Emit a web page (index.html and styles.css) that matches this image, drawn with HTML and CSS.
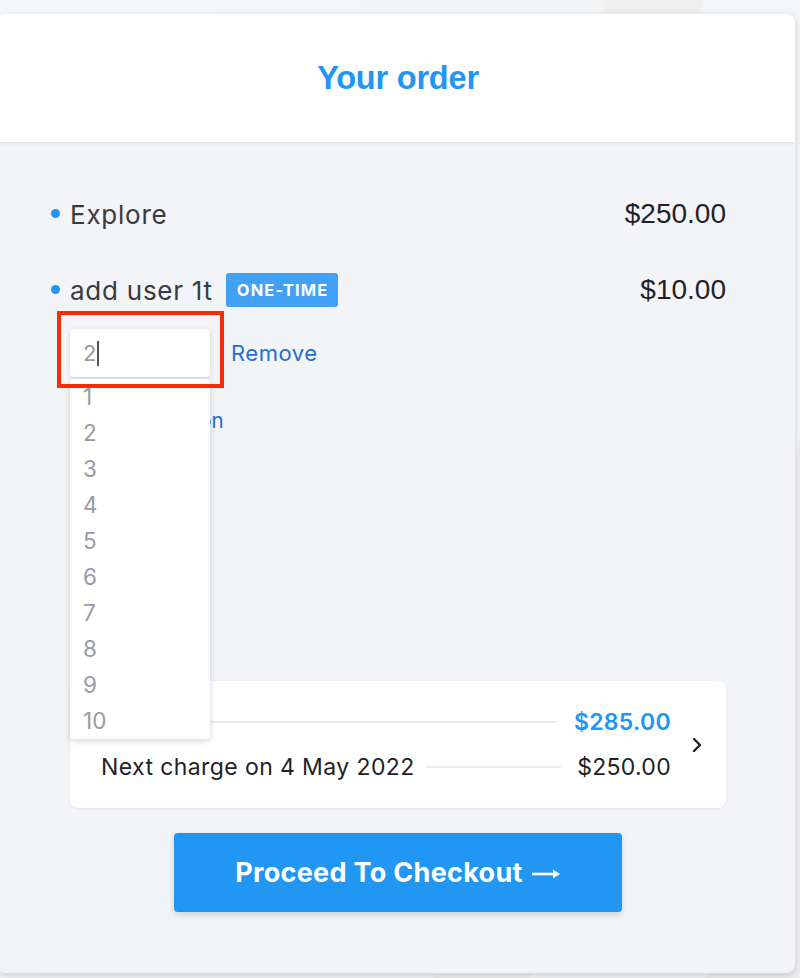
FILE: index.html
```html
<!DOCTYPE html>
<html lang="en">
<head>
<meta charset="utf-8">
<title>Your order</title>
<link rel="stylesheet" href="styles.css">
</head>
<body>
<div class="page">
  <div class="card">
    <header class="card-head">
      <h1 class="title">Your order</h1>
    </header>
    <div class="card-body">
      <ul class="items">
        <li class="item">
          <span class="item-name">Explore</span>
          <span class="price">$250.00</span>
        </li>
        <li class="item">
          <span class="item-name">add user 1t <span class="badge">ONE-TIME</span></span>
          <span class="price">$10.00</span>
        </li>
      </ul>
      <div class="qty-row">
        <div class="qty">
          <div class="qty-input">2<span class="caret"></span></div>
          <ul class="qty-menu">
            <li>1</li><li>2</li><li>3</li><li>4</li><li>5</li>
            <li>6</li><li>7</li><li>8</li><li>9</li><li>10</li>
          </ul>
          <div class="highlight"></div>
        </div>
        <a class="link" href="#">Remove</a>
      </div>
      <a class="link desc-link" href="#">Add description</a>
      <div class="summary">
        <div class="summary-rows">
          <div class="sum-row">
            <span class="sum-label">Total</span>
            <span class="sum-line"></span>
            <span class="sum-value total">$285.00</span>
          </div>
          <div class="sum-row">
            <span class="sum-label">Next charge on 4 May 2022</span>
            <span class="sum-line"></span>
            <span class="sum-value">$250.00</span>
          </div>
        </div>
        <svg class="chevron" width="12" height="16" viewBox="0 0 12 16"><path d="M3 2 L9 8 L3 14" fill="none" stroke="#1f1f24" stroke-width="2.4" stroke-linecap="round" stroke-linejoin="round"/></svg>
      </div>
      <button class="checkout" type="button">Proceed To Checkout <svg class="arrow" width="30" height="12" viewBox="0 0 30 12"><path d="M1 6 H26" stroke="#fff" stroke-width="2.6"/><path d="M22 1.5 L29 6 L22 10.5 Z" fill="#fff"/></svg></button>
    </div>
  </div>
</div>
</body>
</html>
```

FILE: styles.css
```css
* { box-sizing: border-box; }

html, body {
  margin: 0;
  padding: 0;
}

body {
  background: linear-gradient(100deg, #f6f7f8 0%, #f4f5f6 62%, #efefef 62.5%, #efefef 72%, #f5f6f7 72.5%, #f5f6f7 90%, #eeeeee 90.5%);
  font-family: "Inter", "Noto Sans", sans-serif;
  color: #3a3a40;
}

.page {
  padding: 14px 5px 5px 0;
}

.card {
  margin-left: -4px;
  height: 959px;
  border-radius: 9px;
  overflow: hidden;
  background: #f3f4f8;
  box-shadow: 0 3px 8px rgba(0, 0, 0, 0.16);
  display: flex;
  flex-direction: column;
}

.card-head {
  height: 128px;
  background: #fff;
  display: flex;
  align-items: center;
  justify-content: center;
  padding: 0 69px 0 74px;
  box-shadow: 0 1px 4px rgba(0, 0, 0, 0.10);
  position: relative;
  z-index: 1;
}

.title {
  margin: 0;
  font-family: "Liberation Sans", Arial, sans-serif;
  font-weight: 700;
  font-size: 32.5px;
  color: #2196f3;
  letter-spacing: -0.2px;
}

.card-body {
  flex: 1;
  padding: 40px 69px 0 74px;
  display: flex;
  flex-direction: column;
}

.items {
  list-style: none;
  margin: 0;
  padding: 0;
  display: flex;
  flex-direction: column;
  gap: 12px;
}

.item {
  height: 64px;
  display: flex;
  align-items: center;
  justify-content: space-between;
}

.item-name {
  display: flex;
  align-items: center;
  font-size: 26px;
  letter-spacing: 0.75px;
  color: #3a3a40;
}

.item-name::before {
  content: "";
  width: 9px;
  height: 9px;
  border-radius: 50%;
  background: #2196f3;
  margin-left: -19px;
  margin-right: 10px;
  margin-top: -2px;
}

.badge {
  margin-left: 13px;
  height: 34px;
  padding: 0 10px 0 11px;
  display: inline-flex;
  align-items: center;
  background: #42a1f4;
  color: #fff;
  border-radius: 3px;
  font-size: 16.5px;
  font-weight: 700;
  letter-spacing: 1.1px;
}

.price {
  font-family: "Liberation Sans", Arial, sans-serif;
  font-size: 28px;
  color: #222226;
}

.qty-row {
  margin-top: 7px;
  display: flex;
  align-items: center;
  gap: 21px;
}

.qty {
  position: relative;
  width: 140px;
}

.qty-input {
  height: 48px;
  background: #fff;
  border-radius: 4px;
  box-shadow: 0 1px 4px rgba(0, 0, 0, 0.14);
  padding-left: 13px;
  display: flex;
  align-items: center;
  font-size: 22px;
  color: #9b9aa4;
}

.caret {
  width: 2px;
  height: 25px;
  background: #55555c;
  margin-left: 1px;
}

.qty-menu {
  position: absolute;
  top: 50px;
  left: 0;
  width: 140px;
  margin: 0;
  padding: 0;
  list-style: none;
  background: #fff;
  border-radius: 4px;
  box-shadow: 0 2px 6px rgba(0, 0, 0, 0.16);
  z-index: 5;
}

.qty-menu li {
  height: 36px;
  line-height: 36px;
  padding-left: 13px;
  font-size: 22.5px;
  color: #9b9aa4;
}

.highlight {
  position: absolute;
  left: -13px;
  top: -18px;
  width: 167px;
  height: 77px;
  border: 4px solid #fb2a07;
  z-index: 6;
  pointer-events: none;
}

.link {
  color: #1f6fd0;
  text-decoration: none;
  font-size: 22px;
  letter-spacing: 0.5px;
}

.desc-link {
  display: block;
  align-self: flex-start;
  margin-top: 30px;
  line-height: 28px;
  font-size: 20.5px;
  letter-spacing: 0;
}

.summary {
  margin-top: 246px;
  height: 127px;
  background: #fff;
  border-radius: 8px;
  box-shadow: 0 1px 3px rgba(0, 0, 0, 0.06);
  padding: 0 23px 0 31px;
  display: flex;
  align-items: center;
  gap: 20px;
}

.summary-rows {
  flex: 1;
  display: flex;
  flex-direction: column;
  gap: 15px;
}

.sum-row {
  height: 30px;
  display: flex;
  align-items: center;
  font-size: 23px;
  color: #222226;
}

.sum-label {
  letter-spacing: 0.4px;
}

.sum-line {
  flex: 1;
  height: 2px;
  background: #ececef;
  margin: 0 16px 0 11px;
}

.sum-value {
  letter-spacing: 0.3px;
}

.sum-value.total {
  color: #2196f3;
  font-weight: 600;
}

.chevron {
  flex: none;
}

.checkout {
  align-self: center;
  margin-top: 25px;
  width: 448px;
  height: 79px;
  border: none;
  border-radius: 4px;
  background: #2196f3;
  color: #fff;
  font-family: "Inter", "Noto Sans", sans-serif;
  font-size: 27px;
  font-weight: 700;
  letter-spacing: 0.3px;
  box-shadow: 0 3px 6px rgba(0, 0, 0, 0.14);
  display: flex;
  align-items: center;
  justify-content: center;
  gap: 8px;
}

.arrow {
  margin-top: 2px;
}
```
